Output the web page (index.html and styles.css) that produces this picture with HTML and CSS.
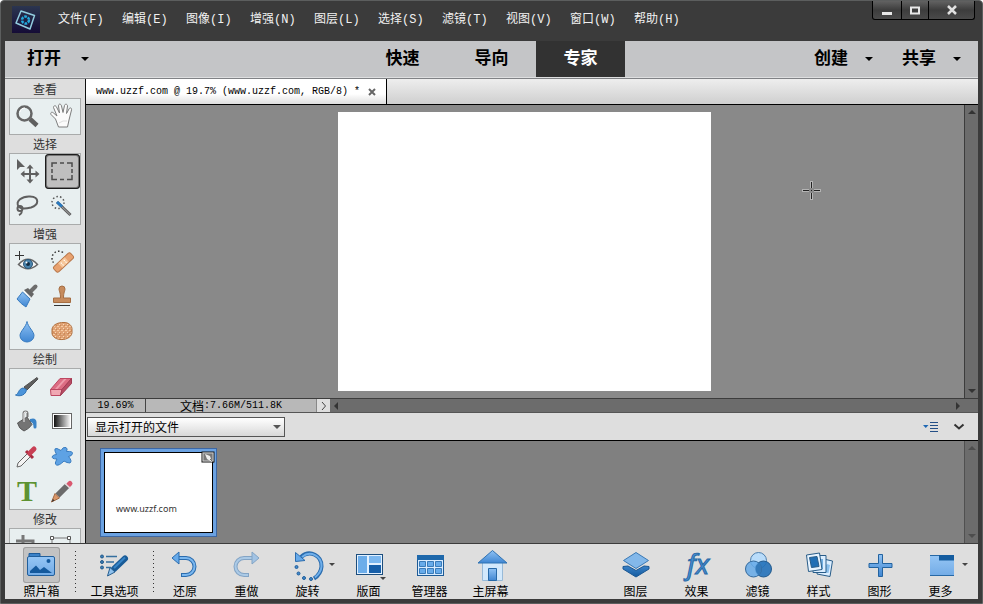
FILE: index.html
```html
<!DOCTYPE html>
<html lang="zh-CN">
<head>
<meta charset="utf-8">
<title>www.uzzf.com</title>
<link rel="stylesheet" href="styles.css">
</head>
<body>
<svg class="defs" aria-hidden="true">
  <defs>
    <linearGradient id="blue" x1="0" y1="0" x2="0" y2="1"><stop offset="0" stop-color="#8fc2f4"/><stop offset="1" stop-color="#3f86d2"/></linearGradient>
    <linearGradient id="soft" x1="0" y1="0" x2="0" y2="1"><stop offset="0" stop-color="#96c6f5"/><stop offset="1" stop-color="#72abe6"/></linearGradient>
    <linearGradient id="deep" x1="0" y1="0" x2="0" y2="1"><stop offset="0" stop-color="#3a82c8"/><stop offset="1" stop-color="#145a9e"/></linearGradient>
    <linearGradient id="fade" x1="0" y1="0" x2="1" y2="0"><stop offset="0" stop-color="#111"/><stop offset="1" stop-color="#f4f4f4"/></linearGradient>
    <linearGradient id="night" x1="0" y1="0" x2="0" y2="1"><stop offset="0" stop-color="#2b3550"/><stop offset="1" stop-color="#150c36"/></linearGradient>
    <pattern id="grain" width="4" height="4" patternUnits="userSpaceOnUse"><rect width="4" height="4" fill="#e0a274"/><rect width="2" height="1" fill="#f7cba2"/><rect x="2" y="2" width="1" height="1" fill="#f9d9b8"/><rect x="3" y="3" width="1" height="1" fill="#c88856"/></pattern>
  </defs>
</svg>
<div class="window">
  <header class="titlebar">
    <svg class="logo" viewBox="0 0 28 27" aria-hidden="true"><rect width="28" height="27" fill="url(#night)"/><path d="M9 5L22.500 9.500L18 23L4 17Z" fill="none" stroke="#92ccdf" stroke-width="1.500" stroke-linejoin="round"/><circle cx="13.500" cy="14" r="3.500" fill="none" stroke="#24aadd" stroke-width="2.500" stroke-dasharray="2.700 1"/></svg>
    <nav class="menu">
      <button>文件(F)</button><button>编辑(E)</button><button>图像(I)</button><button>增强(N)</button><button>图层(L)</button><button>选择(S)</button><button>滤镜(T)</button><button>视图(V)</button><button>窗口(W)</button><button>帮助(H)</button>
    </nav>
    <div class="controls">
      <button aria-label="最小化"><svg width="12" height="12" viewBox="0 0 12 12"><path d="M1 9.500H11" stroke="#e8e8e8" stroke-width="3"/></svg></button>
      <button aria-label="最大化"><svg width="12" height="12" viewBox="0 0 12 12"><rect x="2" y="3.500" width="8" height="6" fill="none" stroke="#e8e8e8" stroke-width="2"/></svg></button>
      <button class="close" aria-label="关闭"><svg width="12" height="12" viewBox="0 0 12 12"><path d="M2 2L10 10M10 2L2 10" stroke="#e0e0e0" stroke-width="2.500"/></svg></button>
    </div>
  </header>

  <div class="modebar">
    <div class="side"><button class="drop">打开<i class="caret"></i></button></div>
    <div class="modes"><button>快速</button><button>导向</button><button class="on">专家</button></div>
    <div class="side end"><button class="drop">创建<i class="caret"></i></button><button class="drop">共享<i class="caret"></i></button></div>
  </div>

  <main class="work">
    <aside class="tools">
      <h2>查看</h2>
      <div class="box">
        <button aria-label="缩放"><svg viewBox="0 0 35 35"><path d="M20 20L27 26.500" stroke="#5f5f5f" stroke-width="4.500"/><circle cx="14.500" cy="14.500" r="7" fill="#e6eff0" stroke="#666" stroke-width="2.500"/><path d="M10 13a5 5 0 0 1 5-4" stroke="#fff" fill="none"/></svg></button>
        <button aria-label="抓手"><svg viewBox="0 0 35 35"><path d="M10.500 20L6 15.500c-1-2 1-3 2.500-1.500L12 17L8.500 8.500c0-2 2-2.500 3-.5L14.500 14L13.500 7c0-2.500 2.500-2.500 3 0L18 13.500L19.500 6.500c.5-2 3-1.500 3 .5L21.500 14.500L24 10c1-2 3-1 2.500 1L24 21L22.500 28H13.500Z" fill="#fbfbfb" stroke="#7d7d7d" stroke-linejoin="round"/><path d="M14 24q4-3 8-2" stroke="#ddd" fill="none"/></svg></button>
      </div>
      <h2>选择</h2>
      <div class="box">
        <button aria-label="移动"><svg viewBox="0 0 35 35"><path d="M7 5V16L10 13L15 13Z" fill="#5f5f5f"/><path d="M20 12.500V27.500M12.500 20H27.500" stroke="#5f5f5f" stroke-width="2"/><path d="M20 10.500L23.500 14.500H16.500ZM20 29.500L16.500 25.500H23.500ZM10.500 20L14.500 16.500V23.500ZM29.500 20L25.500 16.500V23.500Z" fill="#5f5f5f"/></svg></button>
        <button class="on" aria-label="矩形选框"><svg viewBox="0 0 35 35"><path d="M7 13V9H12M22 9H27V13M27 21V25.500H22M12 25.500H7V21M15 9H19M15 25.500H19M7 15V19M27 15V19" fill="none" stroke="#4c4c4c" stroke-width="1.500"/></svg></button>
        <button aria-label="套索"><svg viewBox="0 0 35 35"><path d="M9 18C4 12 13 7 20 7.500C30 8 29 16 21 18.500C17 19.500 11 20 9 18" fill="none" stroke="#5f5f5f" stroke-width="2"/><circle cx="10" cy="19.500" r="2.500" fill="none" stroke="#5f5f5f" stroke-width="2"/><path d="M11 21q2 3-2 5" fill="none" stroke="#5f5f5f" stroke-width="2"/></svg></button>
        <button aria-label="魔棒"><svg viewBox="0 0 35 35"><circle cx="13" cy="13.500" r="6" fill="none" stroke="#555" stroke-width="1.500" stroke-dasharray="1.500 2.200"/><path d="M12 13L25.500 26" stroke="#5f5f5f" stroke-width="3"/><path d="M13 14L25 25.500" stroke="#aaa"/><path d="M12 13L17 17.500" stroke="#2879c0" stroke-width="3"/></svg></button>
      </div>
      <h2>增强</h2>
      <div class="box">
        <button aria-label="红眼消除"><svg viewBox="0 0 35 35"><path d="M9.500 7V16M5 11.500H14" stroke="#333"/><path d="M8.500 20.500Q18 10 27.500 20.500Q18 29 8.500 20.500Z" fill="#f6f6f6" stroke="#666" stroke-width="1.500"/><circle cx="18" cy="20" r="4.500" fill="#4a84ad" stroke="#2d5777"/><circle cx="18" cy="20" r="2" fill="#142c42"/><circle cx="16.500" cy="18.500" r="1" fill="#fff"/></svg></button>
        <button aria-label="污点修复"><svg viewBox="0 0 35 35"><path d="M18 8.500C13 5 7 9 7 14C7 17 8 18 9.500 20" fill="none" stroke="#333" stroke-width="1.500" stroke-dasharray="1.500 2.200"/><g transform="rotate(-43 18.500 18.500)"><rect x="7" y="15" width="23" height="7" rx="2" fill="#e8a270" stroke="#b87649"/><rect x="14" y="15.500" width="9" height="6" fill="#f6c79b"/><path d="M16 17.500h1M20 17.500h1M16 20h1M20 20h1" stroke="#fff" stroke-width="1.500"/></g></svg></button>
        <button aria-label="智能画笔"><svg viewBox="0 0 35 35"><path d="M20 13L25.500 7.500" stroke="#6d6d6d" stroke-width="4" stroke-linecap="round"/><path d="M14 11L18 9L24 15L21 19Z" fill="#656565"/><path d="M12.500 13L20 20L16 28Q11 25 7 20Z" fill="url(#blue)" stroke="#377abf"/><path d="M13.500 11.500L21.500 19" stroke="#fff"/></svg></button>
        <button aria-label="仿制图章"><svg viewBox="0 0 35 35"><path d="M14 10a3 3 0 0 1 6 0C20 12 18.500 13 18.500 19H25.500V23.500H8.500V19H15.500C15.500 13 14 12 14 10Z" fill="#c68b5d" stroke="#a56d42"/><path d="M9 26.500H25" stroke="#333"/></svg></button>
        <button aria-label="模糊"><svg viewBox="0 0 35 35"><path d="M17 7.500C18 13 24 17.500 24 21.500a7 6.500 0 0 1-14 0C10 17.500 16 13 17 7.500Z" fill="url(#blue)" stroke="#397cc0"/></svg></button>
        <button aria-label="海绵"><svg viewBox="0 0 35 35"><path d="M7 15C8 10 14 8.500 18 8.500C24 8 27 12 27 15V19C26 24 20 26 15 25.500C10 25 7 22 7 19Z" fill="url(#grain)" stroke="#b0703f"/><path d="M7.500 17Q10 22 17 21Q24 21 26.500 16" fill="none" stroke="#b97443" stroke-opacity=".5"/></svg></button>
      </div>
      <h2>绘制</h2>
      <div class="box">
        <button aria-label="画笔"><svg viewBox="0 0 35 35"><path d="M14 18L27 8.500L28 10L17 21Z" fill="#5e5e5e" stroke="#505050"/><path d="M16.500 20.500C16 26 10 28 5.500 26C9 25 8 20 13 19Z" fill="#4b94da" stroke="#2f72b4"/></svg></button>
        <button aria-label="橡皮擦"><svg viewBox="0 0 35 35"><path d="M5.500 20.500L15 9.500H26.500L17 20.500Z" fill="#dc6d83" stroke="#bd4862"/><path d="M5.500 20.500H17L15.500 26.500H6Z" fill="#f0a8b3" stroke="#bd4862"/><path d="M17 20.500L26.500 9.500V14.500L15.500 26.500Z" fill="#b84c64" stroke="#a03b53"/><path d="M10 20L19 10H21.500L12.500 20Z" fill="#ee9cab"/></svg></button>
        <button aria-label="油漆桶"><svg viewBox="0 0 35 35"><path d="M20 15Q26 13 26.500 18V23a1.500 1.500 0 0 1-3 0Q23.500 18 20 18Z" fill="#3a83c7"/><path d="M7.500 19L17 13L22 20.500Q19 25 14 27Q9 25 7.500 19Z" fill="#747474" stroke="#5a5a5a"/><path d="M13.500 18V9.500a2 2 0 0 1 4 0V13" fill="none" stroke="#777" stroke-width="2"/><path d="M14 18V10a1.500 1.500 0 0 1 3-1" fill="none" stroke="#f4f4f4"/></svg></button>
        <button aria-label="渐变"><svg viewBox="0 0 35 35"><rect x="7.500" y="9.500" width="19" height="15" fill="#fff" stroke="#666"/><rect x="9" y="11" width="16" height="12" fill="url(#fade)"/></svg></button>
        <button aria-label="吸管"><svg viewBox="0 0 35 35"><path d="M18 14L21 17L11 27L7 28L8 24Z" fill="#f4f4f4" stroke="#666"/><path d="M16 12L23 19" stroke="#a92b40" stroke-width="3"/><path d="M20 14L24 10" stroke="#c84055" stroke-width="5" stroke-linecap="round"/></svg></button>
        <button aria-label="自定形状"><svg viewBox="0 0 35 35"><path d="M10 12Q9 9 12 9.500L16 11.500Q18 7.500 21 8.500Q23 9.500 21.500 12.500Q28 12 27.500 14.500Q27 17 23.500 17.500Q27.500 22 25 24Q22 24 19 22Q14 27 11.500 26Q9 25 12 20Q6 20 7.500 17Q9 15.500 11.500 15.500Z" fill="#5ea2e4" stroke="#397cc0"/></svg></button>
        <button aria-label="文字"><svg viewBox="0 0 35 35"><text x="17" y="27" class="type-glyph">T</text></svg></button>
        <button aria-label="铅笔"><svg viewBox="0 0 35 35"><path d="M23.500 11L25 9.500" stroke="#d95970" stroke-width="5" stroke-linecap="round"/><path d="M12.500 21.500L22 12" stroke="#6b6b6b" stroke-width="6"/><path d="M20 9.500L25 14" stroke="#ddd" stroke-width="1.500"/><path d="M10 19.500L14.500 24L6.500 28Z" fill="#d9976a" stroke="#a66a43"/><path d="M8 25L9.500 26.500L6.500 28Z" fill="#333"/></svg></button>
      </div>
      <h2>修改</h2>
      <div class="box">
        <button aria-label="裁剪"><svg viewBox="0 0 35 35"><path d="M13 6V23H30M6 12H23V28" fill="none" stroke="#777" stroke-width="3"/></svg></button>
        <button aria-label="变换"><svg viewBox="0 0 35 35"><rect x="7" y="9" width="18" height="16" fill="none" stroke="#777"/><path d="M5.500 7.500h3v3h-3zM22.500 7.500h3v3h-3z" fill="#fff" stroke="#555"/></svg></button>
      </div>
    </aside>

    <section class="editor">
      <div class="tabs"><div class="tab"><span class="mono">www.uzzf.com @ 19.7% (www.uzzf.com, RGB/8) *</span><button aria-label="关闭标签"><svg width="8" height="8" viewBox="0 0 8 8"><path d="M1 1L7 7M7 1L1 7" stroke="#666" stroke-width="2"/></svg></button></div></div>
      <div class="stage">
        <div class="canvas"><div class="sheet"></div>
          <svg class="cursor" viewBox="0 0 19 19" aria-hidden="true"><path d="M9.500 0V7M9.500 12V19M0 9.500H7M12 9.500H19" stroke="#b4b4b4" stroke-width="3"/><path d="M9.500 1V7M9.500 12V18M1 9.500H7M12 9.500H18M9 9.500h1" stroke="#222"/></svg>
        </div>
        <div class="vscroll"><i class="up"></i><i class="down"></i></div>
      </div>
      <div class="status">
        <span class="zoom mono">19.69%</span>
        <span class="doc">文档<span class="mono">:7.66M/511.8K</span></span>
        <button class="more" aria-label="状态选项"><svg width="6" height="10" viewBox="0 0 6 10"><path d="M1 1L4.500 5L1 9" fill="none" stroke="#444"/></svg></button>
        <div class="hscroll"><i class="left"></i><i class="right"></i></div>
      </div>
      <div class="binbar">
        <div class="picker"><select aria-label="照片箱内容"><option>显示打开的文件</option></select><i class="caret"></i></div>
        <div class="actions">
          <button aria-label="照片箱菜单"><svg width="16" height="12" viewBox="0 0 16 12"><path d="M0 4H5.500L2.750 7Z" fill="#1f68b4"/><path d="M7 1.500H15M7 4.500H15M7 7.500H15M7 10.500H15" stroke="#244f86"/></svg></button>
          <button aria-label="折叠"><svg width="12" height="12" viewBox="0 0 12 12"><path d="M1.500 3.500L6 7.500L10.500 3.500" fill="none" stroke="#333" stroke-width="2"/></svg></button>
        </div>
      </div>
      <div class="bin">
        <div class="thumbs"><div class="thumb"><span>www.uzzf.com</span><svg class="badge" viewBox="0 0 14 13" aria-hidden="true"><rect x="1" y="1" width="12" height="10" fill="#777" stroke="#111"/><rect x="2" y="2" width="10" height="8" fill="none" stroke="#ccc"/><path d="M4 3L9 5L11 11L6 8Z" fill="#eee"/><path d="M9 8L13 12" stroke="#333" stroke-dasharray="1 1"/></svg></div></div>
        <div class="vscroll dim"><i class="up"></i><i class="down"></i></div>
      </div>
    </section>
  </main>

  <footer class="taskbar">
    <button class="on"><svg viewBox="0 0 37 36"><path d="M6 9V6.500H17V9" fill="#3b82c8" stroke="#1d5b99"/><rect x="4.500" y="9.500" width="27" height="19" rx="1.500" fill="url(#soft)" stroke="#215f9c"/><path d="M7 26V24L13 18.500L17 23L21 20L29 26Z" fill="#14599d"/><circle cx="25.500" cy="14" r="2" fill="#14599d"/></svg>照片箱</button>
    <span class="sep"></span>
    <button class="wide"><svg viewBox="0 0 40 36"><path d="M11 9.500H22M11 15H19M11 20.500H16" stroke="#356f9f" stroke-width="1.500"/><g fill="#387cb6" stroke="#245a8b"><circle cx="7" cy="9.500" r="1.500"/><circle cx="7" cy="15" r="1.500"/><circle cx="7" cy="20.500" r="1.500"/></g><path d="M19 22L30 11.500" stroke="#195b97" stroke-width="6" stroke-linecap="round"/><path d="M19 21L30 10.500" stroke="#3785c8" stroke-width="2"/><path d="M15 20.500L20 25L12.500 29Z" fill="#8fc2ef" stroke="#285f8f"/></svg>工具选项</button>
    <span class="sep"></span>
    <button class="step"><svg viewBox="0 0 40 36"><path d="M14 11H21a8.500 8.500 0 0 1 0 17H16" fill="none" stroke="#2b6cae" stroke-width="4"/><path d="M14 11H21a8.500 8.500 0 0 1 0 17H17" fill="none" stroke="#7ab7ef" stroke-width="2"/><path d="M7 11L14 5V17Z" fill="#67aaea" stroke="#2b6cae"/></svg>还原</button>
    <button class="off"><svg viewBox="0 0 40 36"><path d="M26 11H17a8.500 8.500 0 0 0 0 17H22" fill="none" stroke="#2b6cae" stroke-width="4"/><path d="M26 11H17a8.500 8.500 0 0 0 0 17H21" fill="none" stroke="#7ab7ef" stroke-width="2"/><path d="M32 11L25 5V17Z" fill="#67aaea" stroke="#2b6cae"/></svg><span>重做</span></button>
    <button><svg viewBox="0 0 40 36"><path d="M13 10C22 2 34 9 33.500 19.500C33 26 30 29 26 31.500" fill="none" stroke="#2a6cae" stroke-width="4"/><path d="M14 10C22 3 34 9 33.500 19.500C33 25 30 28 27 30.500" fill="none" stroke="#70afea" stroke-width="2"/><path d="M7.500 5.500L17 13.500L7.500 14.500Z" fill="#67aaea" stroke="#2b6cae"/><g fill="#4189cd" stroke="#225f9b"><circle cx="8.500" cy="20" r="1.500"/><circle cx="10.500" cy="26.500" r="1.500"/><circle cx="16" cy="31" r="1.500"/><circle cx="23" cy="32" r="1.500"/></g><path d="M41 16H47L44 19Z" fill="#444"/></svg>旋转</button>
    <button><svg viewBox="0 0 40 36"><rect x="7.500" y="7.500" width="26" height="20" fill="#e3f1ff" stroke="#1b4d7d"/><path d="M9 9H18V26H9Z" fill="#6cadea"/><path d="M20 9H32V16H20Z" fill="#7cb8f0"/><path d="M20 18H32V26H20Z" fill="#175fa9"/><path d="M31 30H37L34 33Z" fill="#444"/></svg>版面</button>
    <button><svg viewBox="0 0 40 36"><rect x="7.500" y="8.500" width="26" height="20" fill="#d9ecff" stroke="#1d5b96"/><path d="M7 8H34V13H7Z" fill="#1e68ab"/><path d="M9.500 14.500h6v5h-6zM17.500 14.500h6v5h-6zM25.500 14.500h6v5h-6zM9.500 21.500h6v5h-6zM17.500 21.500h6v5h-6zM25.500 21.500h6v5h-6z" fill="#67abea" stroke="#397bb9"/></svg>管理器</button>
    <button><svg viewBox="0 0 40 36"><path d="M11.500 15H31.500V33.500H11.500Z" fill="#d3e9fc" stroke="#98bad8"/><path d="M17.500 21.500H25.500V33.500H17.500Z" fill="url(#blue)" stroke="#2769a7"/><path d="M21.500 3.500L36 16H7Z" fill="url(#blue)" stroke="#2f72b2"/></svg>主屏幕</button>
    <span class="fill"></span>
    <button><svg viewBox="0 0 40 36"><path d="M7 19.500L12 19L20 23.500L28 19L33 19.500V22L20 30L7 22Z" fill="url(#deep)" stroke="#1a5793"/><path d="M20 5.500L32.500 13.500L20 21.500L7.500 13.500Z" fill="#83b8ea" stroke="#3a79b5"/></svg>图层</button>
    <button><svg viewBox="0 0 40 36"><text x="21" y="27" class="fx-glyph">fx</text></svg>效果</button>
    <button><svg viewBox="0 0 40 36"><circle cx="20.500" cy="13.500" r="8" fill="#b9dcfa" stroke="#4d7fae"/><circle cx="25.500" cy="22" r="8" fill="#2371b9" fill-opacity=".9" stroke="#245b8d"/><circle cx="15.500" cy="22" r="8" fill="#65a9e8" fill-opacity=".85" stroke="#34699b"/><path d="M20.500 15.800A8 8 0 0 1 20.500 28.200A8 8 0 0 1 20.500 15.800Z" fill="#3479b9"/></svg>滤镜</button>
    <button><svg viewBox="0 0 40 36"><g stroke="#285c88"><path d="M20 11L33.500 14L31 29.500L18 27Z" fill="#dceeff"/><path d="M28 17L31 18L29.500 26L22 25Z" fill="#8cc0ec" stroke="none"/><path d="M14 8.500H27V25.500H14Z" fill="#dceeff"/><path d="M17 12H24V22H17Z" fill="#73aee0" stroke="none"/><path d="M7.500 8L20.500 6L23 22.500L9.500 24.500Z" fill="#e8f4ff"/><path d="M10.500 10.500L18 9.500L20 19.500L12.500 20.500Z" fill="#216fb5"/></g></svg>样式</button>
    <button><svg viewBox="0 0 40 36"><path d="M18.500 7.500H22.500V16.500H32V20.500H22.500V29.500H18.500V20.500H9V16.500H18.500Z" fill="url(#blue)" stroke="#23639f"/></svg>图形</button>
    <button><svg viewBox="0 0 40 36"><rect x="9" y="8" width="24" height="21" fill="url(#soft)"/><path d="M9 8.500H33M9 28.500H33" stroke="#2768a5"/><path d="M18 8H33V13.500H18Z" fill="#145c9f"/><path d="M41 16H47L44 19Z" fill="#444"/></svg>更多</button>
  </footer>
</div>
</body>
</html>
```

FILE: styles.css
```css
* { box-sizing: border-box; }

body {
  margin: 0;
  background: #fff;
  color: #000;
  font: 12px/16px "Noto Sans CJK SC", sans-serif;
}

button {
  margin: 0;
  padding: 0;
  border: 0;
  background: none;
  color: inherit;
  font: inherit;
}

.defs { position: absolute; width: 0; height: 0; }

.mono { font-family: "Liberation Mono", monospace; font-size: 10px; white-space: pre; }

.window {
  display: flex;
  flex-direction: column;
  height: 100vh;
  padding: 0 4px 4px;
  border: 1px solid #5c5e5e;
  border-radius: 4px 4px 0 0;
  background: #3b3b3b;
}

/* Title bar */
.titlebar {
  display: flex;
  flex: none;
  align-items: flex-start;
  height: 40px;
  padding: 0 3px 0 7px;
}

.logo { width: 28px; height: 27px; margin-top: 5px; }

.menu {
  display: flex;
  flex: 1;
  margin: 11px 0 0 18px;
  color: #f2f2f2;
  font-family: "Liberation Mono", "Noto Sans CJK SC", monospace;
}

.menu button { width: 64px; text-align: left; white-space: nowrap; }

.controls {
  display: flex;
  border: 1px solid #000;
  border-top: 0;
  border-radius: 0 0 3px 3px;
  background: linear-gradient(#626262, #3d3d3d 50%, #4a4a4a);
}

.controls button { display: grid; place-items: center; width: 28px; height: 18px; }
.controls button + button { width: 27px; border-left: 1px solid #000; }
.controls .close { width: 46px; }

/* Mode bar */
.modebar {
  display: grid;
  flex: none;
  grid-template-columns: 1fr auto 1fr;
  height: 38px;
  border-bottom: 1px solid #808285;
  background: #c4c5c7;
  box-shadow: inset 0 -1px #dedfe0;
  padding-bottom: 1px;
  font-size: 17px;
  font-weight: 700;
  line-height: 32px;
}

.modes, .side { display: flex; }
.modes button { width: 89px; padding-bottom: 4px; }
.modes .on { background: #323232; color: #fff; }
.side { padding: 0 17px 0 22px; }
.end { justify-content: flex-end; gap: 29px; }
.drop { display: flex; align-items: center; gap: 20px; padding-bottom: 4px; }
.end .drop { gap: 17px; }
.caret { width: 0; border: 4px solid transparent; border-top-color: currentColor; border-bottom: 0; }
.drop .caret { margin-top: 4px; }

/* Work area */
.work { display: flex; flex: 1; min-height: 0; border-bottom: 1px solid #3c3c3c; }

.tools {
  flex: none;
  width: 81px;
  padding: 1px 4px 0;
  border-right: 1px solid #111;
  background: #dedede;
  overflow: hidden;
}

.tools h2 { margin: 0; color: #333; font-size: 12px; font-weight: 400; line-height: 18px; text-align: center; }

.box {
  display: grid;
  grid-template-columns: 35px 35px;
  grid-auto-rows: 35px;
  border: 1px solid #a9abab;
  background: #e8eff0;
}

.box button { border-radius: 4px; }
.box .on { background: #bfbfbf; box-shadow: inset 0 0 0 1px #1c1c1c, inset 0 0 0 2px #777; }
.box svg { display: block; width: 35px; height: 35px; }

.type-glyph { fill: #5d9232; font: bold 30px "Liberation Serif", serif; text-anchor: middle; }

.editor { display: flex; flex: 1; flex-direction: column; min-width: 0; }

.tabs {
  display: flex;
  flex: none;
  height: 26px;
  border-bottom: 1px solid #000;
  background: linear-gradient(#eee, #cfcfcf);
}

.tab {
  display: flex;
  align-items: center;
  gap: 8px;
  padding: 0 10px;
  border-right: 1px solid #000;
  background: linear-gradient(#fff 60%, #dedede);
}

.tab button { display: grid; }

.stage { display: flex; flex: 1; min-height: 0; }

.canvas {
  position: relative;
  display: grid;
  flex: 1;
  place-items: center;
  padding-right: 2px;
  background: #898989;
}

.sheet { width: 373px; height: 279px; background: #fff; }

.cursor { position: absolute; top: 76px; left: 716px; width: 19px; height: 19px; }

.vscroll, .hscroll { display: flex; align-items: center; justify-content: space-between; background: #6c6c6c; }
.vscroll { flex: none; flex-direction: column; width: 14px; padding: 5px 0; border-left: 1px solid #3c3c3c; }
.vscroll i, .hscroll i { border: 4px solid transparent; }
.vscroll .up { border-top: 0; border-bottom-color: #333; }
.vscroll .down { border-bottom: 0; border-top-color: #333; }
.hscroll .left { border-left: 0; border-right-color: #333; }
.hscroll .right { border-right: 0; border-left-color: #333; }
.dim { border-left-color: #505050; }
.vscroll.dim .up { border-bottom-color: #4d4d4d; }
.vscroll.dim .down { border-top-color: #4d4d4d; }

.status {
  display: flex;
  flex: none;
  height: 15px;
  border-top: 1px solid #3c3c3c;
  border-bottom: 1px solid #555;
  background: #b8b8b8;
  line-height: 13px;
  text-align: center;
}

.zoom { width: 60px; border-right: 1px solid #444; }
.doc { display: flex; align-items: center; justify-content: center; width: 170px; white-space: nowrap; }
.more { display: grid; place-items: center; width: 14px; border-left: 1px solid #888; background: #dedede; }
.hscroll { flex: 1; padding: 0 18px 0 4px; }

.binbar {
  display: flex;
  flex: none;
  align-items: center;
  justify-content: space-between;
  height: 28px;
  padding: 0 13px 0 1px;
  border-bottom: 1px solid #000;
  background: #dedede;
}

.picker { position: relative; width: 198px; color: #555; }
.picker .caret { position: absolute; top: 8px; right: 4px; pointer-events: none; }

select {
  display: block;
  width: 100%;
  height: 20px;
  padding: 0 7px;
  border: 1px solid #555;
  border-radius: 0;
  appearance: none;
  background: linear-gradient(#fff, #d8d8d8);
  color: #000;
  font: inherit;
}

.actions { display: flex; gap: 14px; }
.actions button { display: grid; }

.bin { display: flex; flex: none; height: 102px; background: #808080; }
.thumbs { flex: 1; padding: 7px 14px; }

.thumb {
  position: relative;
  display: flex;
  align-items: flex-end;
  width: 117px;
  height: 89px;
  padding: 0 15px 18px;
  border: 1px solid #3d67a3;
  background: #fff;
  box-shadow: inset 0 0 0 3px #6ba2e2, inset 0 0 0 4px #000;
  color: #333;
  font: 9px/18px "Noto Sans", sans-serif;
}

.badge { position: absolute; top: 2px; right: 1px; width: 14px; height: 13px; }

/* Task bar */
.taskbar {
  display: flex;
  flex: none;
  padding: 3px 7px 0 6px;
  background: #dedede;
}

.taskbar button {
  display: flex;
  flex-direction: column;
  align-items: center;
  width: 61px;
  white-space: nowrap;
}

.taskbar svg { display: block; width: 40px; height: 36px; overflow: visible; }
.taskbar .on svg { width: 37px; border-radius: 3px; background: #c3c3c3; box-shadow: inset 0 0 0 1px #a0a0a0; }
.taskbar .wide { width: 77px; }
.taskbar .step { width: 62px; }
.taskbar .off svg { opacity: .5; }

.sep {
  width: 1px;
  height: 42px;
  margin-top: 4px;
  background: repeating-linear-gradient(#333 0 1px, transparent 1px 4px);
}

.sep:first-of-type { margin-left: 3px; }
.fill { flex: 1; }

.fx-glyph { fill: #4b91d2; stroke: #2768a6; stroke-width: 1px; font: italic 28px "Open Sans", sans-serif; text-anchor: middle; }
```
